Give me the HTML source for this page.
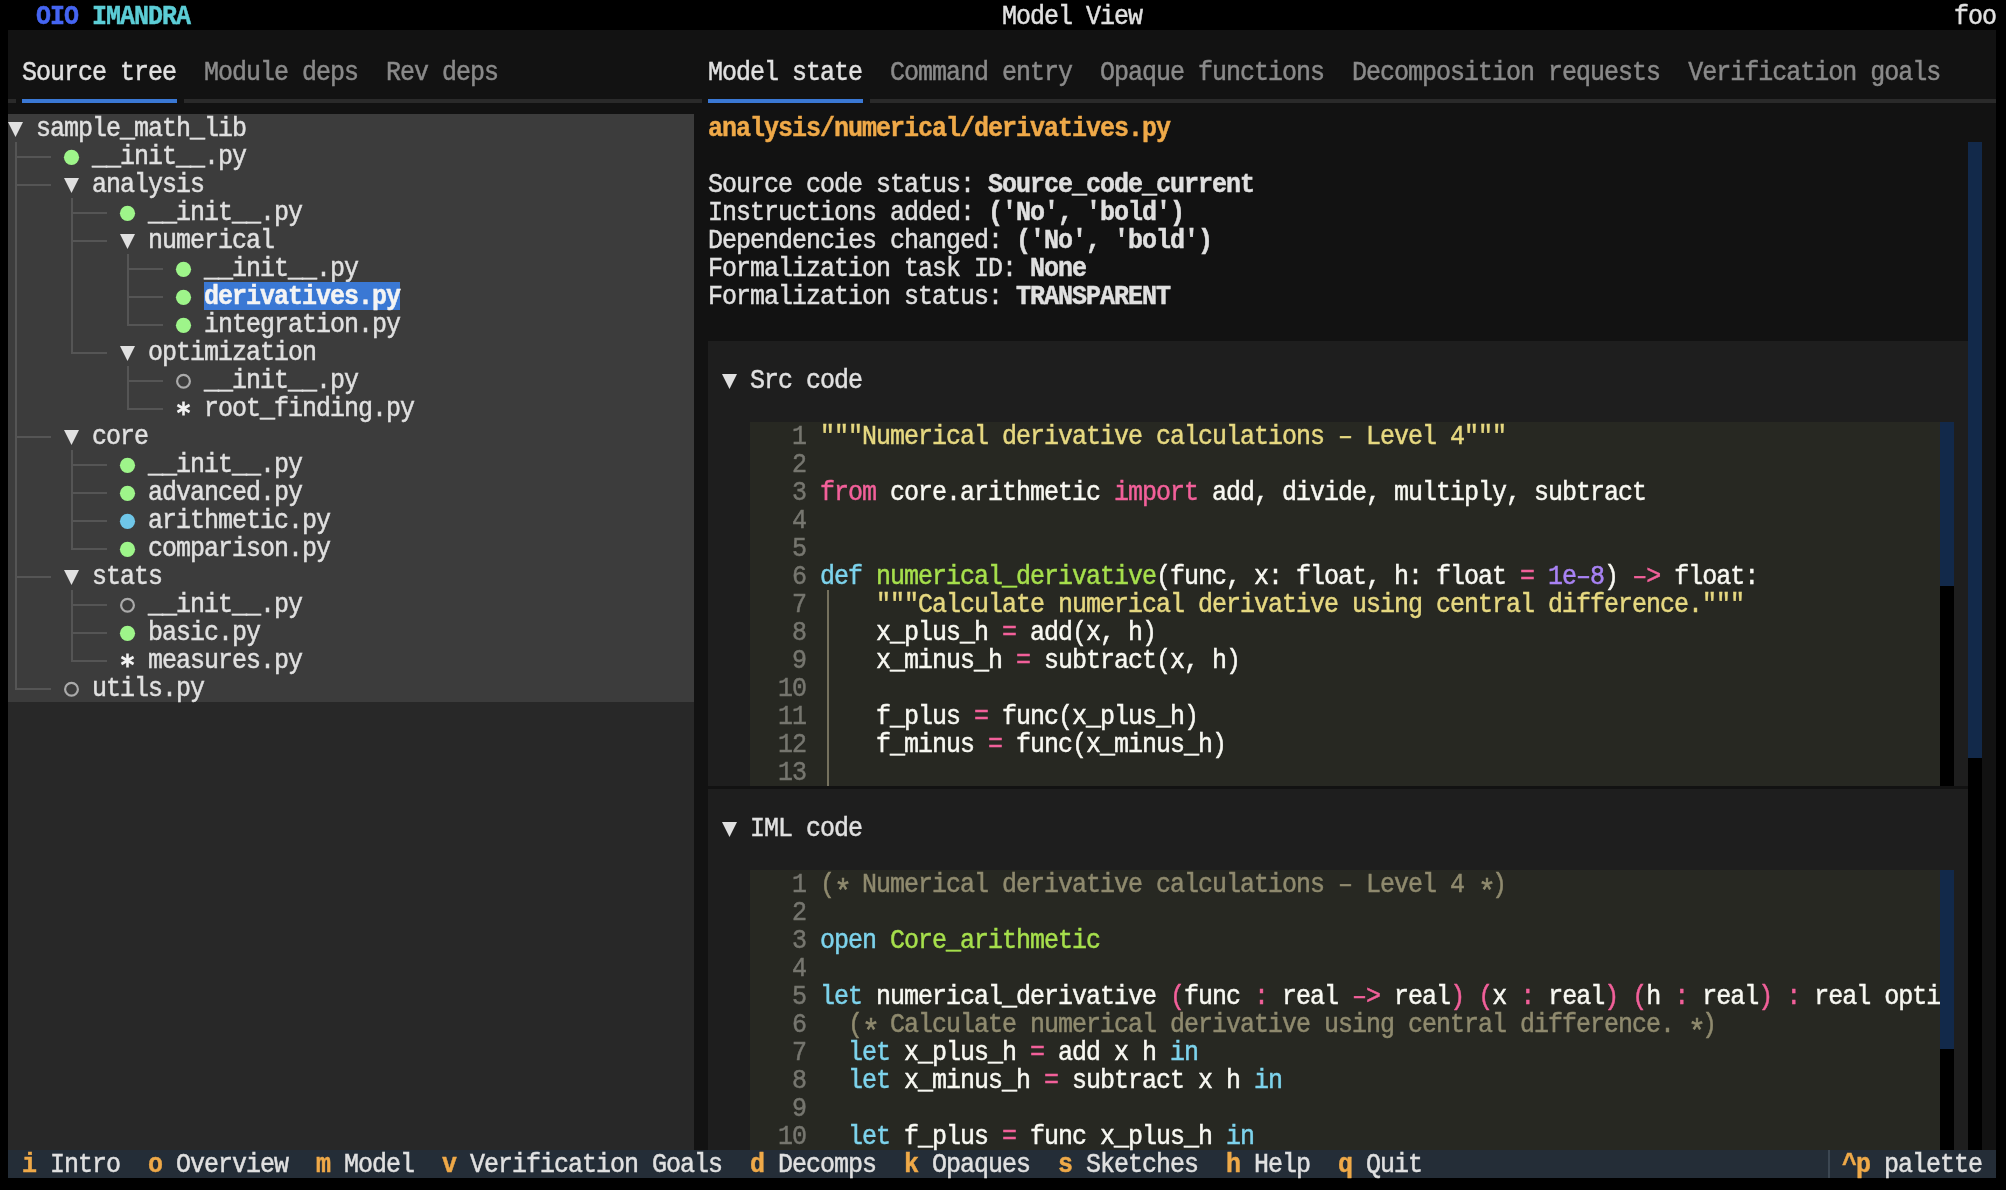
<!DOCTYPE html>
<html><head><meta charset="utf-8"><style>
html,body{margin:0;padding:0;width:2006px;height:1190px;overflow:hidden;background:#000}
.t{position:absolute;white-space:pre;font-family:"Liberation Mono",monospace;font-size:25px;letter-spacing:-1.0024px;line-height:28px;height:28px;color:#e0e0e0;-webkit-text-stroke-width:0.45px;transform:scaleY(1.08);transform-origin:0 20px;will-change:transform}
svg{position:absolute;left:0;top:0}
</style></head><body>
<div style="position:absolute;left:0px;top:0px;width:2006px;height:1190px;background:#000;"></div><div style="position:absolute;left:8px;top:30px;width:1988px;height:1120px;background:#121212;"></div><div style="position:absolute;left:8px;top:114px;width:686px;height:588px;background:#3c3c3c;"></div><div style="position:absolute;left:8px;top:702px;width:686px;height:448px;background:#282828;"></div><div style="position:absolute;left:8px;top:1150px;width:1988px;height:28px;background:#242d37;"></div><div class="t" style="left:36px;top:4px"><span style="color:#4565f2;font-weight:bold">OIO</span><span style="color:#e0e0e0"> </span><span style="color:#5ccdd6;font-weight:bold">IMANDRA</span></div><div class="t" style="left:1002px;top:4px"><span style="color:#e0e0e0">Model View</span></div><div class="t" style="left:1954px;top:4px"><span style="color:#e0e0e0">foo</span></div><div style="position:absolute;left:8px;top:99px;width:686px;height:4px;background:#2a2a2a;"></div><div style="position:absolute;left:16px;top:99px;width:6px;height:4px;background:#121212;"></div><div style="position:absolute;left:176px;top:99px;width:8px;height:4px;background:#121212;"></div><div style="position:absolute;left:22px;top:99px;width:155px;height:4px;background:#3a78d4;"></div><div style="position:absolute;left:694px;top:99px;width:1302px;height:4px;background:#2a2a2a;"></div><div style="position:absolute;left:702px;top:99px;width:6px;height:4px;background:#121212;"></div><div style="position:absolute;left:862px;top:99px;width:8px;height:4px;background:#121212;"></div><div style="position:absolute;left:708px;top:99px;width:155px;height:4px;background:#3a78d4;"></div><div class="t" style="left:22px;top:60px"><span style="color:#e0e0e0">Source tree</span><span style="color:#e0e0e0">  </span><span style="color:#8a8a8a">Module deps</span><span style="color:#e0e0e0">  </span><span style="color:#8a8a8a">Rev deps</span></div><div class="t" style="left:708px;top:60px"><span style="color:#e0e0e0">Model state</span><span style="color:#e0e0e0">  </span><span style="color:#8a8a8a">Command entry</span><span style="color:#e0e0e0">  </span><span style="color:#8a8a8a">Opaque functions</span><span style="color:#e0e0e0">  </span><span style="color:#8a8a8a">Decomposition requests</span><span style="color:#e0e0e0">  </span><span style="color:#8a8a8a">Verification goals</span></div><div class="t" style="left:36px;top:116px"><span style="color:#e0e0e0">sample_math_lib</span></div><div style="position:absolute;left:15px;top:142px;width:2px;height:28px;background:#555555;"></div><div style="position:absolute;left:17px;top:156px;width:34px;height:2px;background:#555555;"></div><div class="t" style="left:92px;top:144px"><span style="color:#e0e0e0">__init__.py</span></div><div style="position:absolute;left:15px;top:170px;width:2px;height:28px;background:#555555;"></div><div style="position:absolute;left:17px;top:184px;width:34px;height:2px;background:#555555;"></div><div class="t" style="left:92px;top:172px"><span style="color:#e0e0e0">analysis</span></div><div style="position:absolute;left:15px;top:198px;width:2px;height:28px;background:#555555;"></div><div style="position:absolute;left:71px;top:198px;width:2px;height:28px;background:#555555;"></div><div style="position:absolute;left:73px;top:212px;width:34px;height:2px;background:#555555;"></div><div class="t" style="left:148px;top:200px"><span style="color:#e0e0e0">__init__.py</span></div><div style="position:absolute;left:15px;top:226px;width:2px;height:28px;background:#555555;"></div><div style="position:absolute;left:71px;top:226px;width:2px;height:28px;background:#555555;"></div><div style="position:absolute;left:73px;top:240px;width:34px;height:2px;background:#555555;"></div><div class="t" style="left:148px;top:228px"><span style="color:#e0e0e0">numerical</span></div><div style="position:absolute;left:15px;top:254px;width:2px;height:28px;background:#555555;"></div><div style="position:absolute;left:71px;top:254px;width:2px;height:28px;background:#555555;"></div><div style="position:absolute;left:127px;top:254px;width:2px;height:28px;background:#555555;"></div><div style="position:absolute;left:129px;top:268px;width:34px;height:2px;background:#555555;"></div><div class="t" style="left:204px;top:256px"><span style="color:#e0e0e0">__init__.py</span></div><div style="position:absolute;left:15px;top:282px;width:2px;height:28px;background:#555555;"></div><div style="position:absolute;left:71px;top:282px;width:2px;height:28px;background:#555555;"></div><div style="position:absolute;left:127px;top:282px;width:2px;height:28px;background:#555555;"></div><div style="position:absolute;left:129px;top:296px;width:34px;height:2px;background:#555555;"></div><div style="position:absolute;left:204px;top:282px;width:196px;height:28px;background:#3a78d4;"></div><div class="t" style="left:204px;top:284px"><span style="color:#f4f4f4;font-weight:bold">derivatives.py</span></div><div style="position:absolute;left:15px;top:310px;width:2px;height:28px;background:#555555;"></div><div style="position:absolute;left:71px;top:310px;width:2px;height:28px;background:#555555;"></div><div style="position:absolute;left:127px;top:310px;width:2px;height:16px;background:#555555;"></div><div style="position:absolute;left:129px;top:324px;width:34px;height:2px;background:#555555;"></div><div class="t" style="left:204px;top:312px"><span style="color:#e0e0e0">integration.py</span></div><div style="position:absolute;left:15px;top:338px;width:2px;height:28px;background:#555555;"></div><div style="position:absolute;left:71px;top:338px;width:2px;height:16px;background:#555555;"></div><div style="position:absolute;left:73px;top:352px;width:34px;height:2px;background:#555555;"></div><div class="t" style="left:148px;top:340px"><span style="color:#e0e0e0">optimization</span></div><div style="position:absolute;left:15px;top:366px;width:2px;height:28px;background:#555555;"></div><div style="position:absolute;left:127px;top:366px;width:2px;height:28px;background:#555555;"></div><div style="position:absolute;left:129px;top:380px;width:34px;height:2px;background:#555555;"></div><div class="t" style="left:204px;top:368px"><span style="color:#e0e0e0">__init__.py</span></div><div style="position:absolute;left:15px;top:394px;width:2px;height:28px;background:#555555;"></div><div style="position:absolute;left:127px;top:394px;width:2px;height:16px;background:#555555;"></div><div style="position:absolute;left:129px;top:408px;width:34px;height:2px;background:#555555;"></div><div class="t" style="left:204px;top:396px"><span style="color:#e0e0e0">root_finding.py</span></div><div style="position:absolute;left:15px;top:422px;width:2px;height:28px;background:#555555;"></div><div style="position:absolute;left:17px;top:436px;width:34px;height:2px;background:#555555;"></div><div class="t" style="left:92px;top:424px"><span style="color:#e0e0e0">core</span></div><div style="position:absolute;left:15px;top:450px;width:2px;height:28px;background:#555555;"></div><div style="position:absolute;left:71px;top:450px;width:2px;height:28px;background:#555555;"></div><div style="position:absolute;left:73px;top:464px;width:34px;height:2px;background:#555555;"></div><div class="t" style="left:148px;top:452px"><span style="color:#e0e0e0">__init__.py</span></div><div style="position:absolute;left:15px;top:478px;width:2px;height:28px;background:#555555;"></div><div style="position:absolute;left:71px;top:478px;width:2px;height:28px;background:#555555;"></div><div style="position:absolute;left:73px;top:492px;width:34px;height:2px;background:#555555;"></div><div class="t" style="left:148px;top:480px"><span style="color:#e0e0e0">advanced.py</span></div><div style="position:absolute;left:15px;top:506px;width:2px;height:28px;background:#555555;"></div><div style="position:absolute;left:71px;top:506px;width:2px;height:28px;background:#555555;"></div><div style="position:absolute;left:73px;top:520px;width:34px;height:2px;background:#555555;"></div><div class="t" style="left:148px;top:508px"><span style="color:#e0e0e0">arithmetic.py</span></div><div style="position:absolute;left:15px;top:534px;width:2px;height:28px;background:#555555;"></div><div style="position:absolute;left:71px;top:534px;width:2px;height:16px;background:#555555;"></div><div style="position:absolute;left:73px;top:548px;width:34px;height:2px;background:#555555;"></div><div class="t" style="left:148px;top:536px"><span style="color:#e0e0e0">comparison.py</span></div><div style="position:absolute;left:15px;top:562px;width:2px;height:28px;background:#555555;"></div><div style="position:absolute;left:17px;top:576px;width:34px;height:2px;background:#555555;"></div><div class="t" style="left:92px;top:564px"><span style="color:#e0e0e0">stats</span></div><div style="position:absolute;left:15px;top:590px;width:2px;height:28px;background:#555555;"></div><div style="position:absolute;left:71px;top:590px;width:2px;height:28px;background:#555555;"></div><div style="position:absolute;left:73px;top:604px;width:34px;height:2px;background:#555555;"></div><div class="t" style="left:148px;top:592px"><span style="color:#e0e0e0">__init__.py</span></div><div style="position:absolute;left:15px;top:618px;width:2px;height:28px;background:#555555;"></div><div style="position:absolute;left:71px;top:618px;width:2px;height:28px;background:#555555;"></div><div style="position:absolute;left:73px;top:632px;width:34px;height:2px;background:#555555;"></div><div class="t" style="left:148px;top:620px"><span style="color:#e0e0e0">basic.py</span></div><div style="position:absolute;left:15px;top:646px;width:2px;height:28px;background:#555555;"></div><div style="position:absolute;left:71px;top:646px;width:2px;height:16px;background:#555555;"></div><div style="position:absolute;left:73px;top:660px;width:34px;height:2px;background:#555555;"></div><div class="t" style="left:148px;top:648px"><span style="color:#e0e0e0">measures.py</span></div><div style="position:absolute;left:15px;top:674px;width:2px;height:16px;background:#555555;"></div><div style="position:absolute;left:17px;top:688px;width:34px;height:2px;background:#555555;"></div><div class="t" style="left:92px;top:676px"><span style="color:#e0e0e0">utils.py</span></div><div class="t" style="left:708px;top:116px"><span style="color:#efa948;font-weight:bold">analysis/numerical/derivatives.py</span></div><div class="t" style="left:708px;top:172px"><span style="color:#e0e0e0">Source code status: </span><span style="color:#e0e0e0;font-weight:bold">Source_code_current</span></div><div class="t" style="left:708px;top:200px"><span style="color:#e0e0e0">Instructions added: </span><span style="color:#e0e0e0;font-weight:bold">(&#x27;No&#x27;, &#x27;bold&#x27;)</span></div><div class="t" style="left:708px;top:228px"><span style="color:#e0e0e0">Dependencies changed: </span><span style="color:#e0e0e0;font-weight:bold">(&#x27;No&#x27;, &#x27;bold&#x27;)</span></div><div class="t" style="left:708px;top:256px"><span style="color:#e0e0e0">Formalization task ID: </span><span style="color:#e0e0e0;font-weight:bold">None</span></div><div class="t" style="left:708px;top:284px"><span style="color:#e0e0e0">Formalization status: </span><span style="color:#e0e0e0;font-weight:bold">TRANSPARENT</span></div><div style="position:absolute;left:708px;top:338px;width:1260px;height:448px;background:#1e1e1e;"></div><div style="position:absolute;left:708px;top:338px;width:1260px;height:3px;background:#121212;"></div><div class="t" style="left:750px;top:368px"><span style="color:#e0e0e0">Src code</span></div><div style="position:absolute;left:750px;top:422px;width:1190px;height:364px;background:#272822;"></div><div class="t" style="left:764px;top:424px"><span style="color:#76766f">  1</span></div><div class="t" style="left:820px;top:424px"><span style="color:#e6d880">&quot;&quot;&quot;Numerical derivative calculations – Level 4&quot;&quot;&quot;</span></div><div class="t" style="left:764px;top:452px"><span style="color:#76766f">  2</span></div><div class="t" style="left:764px;top:480px"><span style="color:#76766f">  3</span></div><div class="t" style="left:820px;top:480px"><span style="color:#f2609a">from</span><span style="color:#f8f8f2"> core.arithmetic </span><span style="color:#f2609a">import</span><span style="color:#f8f8f2"> add, divide, multiply, subtract</span></div><div class="t" style="left:764px;top:508px"><span style="color:#76766f">  4</span></div><div class="t" style="left:764px;top:536px"><span style="color:#76766f">  5</span></div><div class="t" style="left:764px;top:564px"><span style="color:#76766f">  6</span></div><div class="t" style="left:820px;top:564px"><span style="color:#7dd3ec">def</span><span style="color:#f8f8f2"> </span><span style="color:#a6df4c">numerical_derivative</span><span style="color:#f8f8f2">(func, x: float, h: float </span><span style="color:#f2609a">=</span><span style="color:#f8f8f2"> </span><span style="color:#a983f5">1e–8</span><span style="color:#f8f8f2">) </span><span style="color:#f2609a">–&gt;</span><span style="color:#f8f8f2"> float:</span></div><div class="t" style="left:764px;top:592px"><span style="color:#76766f">  7</span></div><div class="t" style="left:820px;top:592px"><span style="color:#e6d880">    &quot;&quot;&quot;Calculate numerical derivative using central difference.&quot;&quot;&quot;</span></div><div class="t" style="left:764px;top:620px"><span style="color:#76766f">  8</span></div><div class="t" style="left:820px;top:620px"><span style="color:#f8f8f2">    x_plus_h </span><span style="color:#f2609a">=</span><span style="color:#f8f8f2"> add(x, h)</span></div><div class="t" style="left:764px;top:648px"><span style="color:#76766f">  9</span></div><div class="t" style="left:820px;top:648px"><span style="color:#f8f8f2">    x_minus_h </span><span style="color:#f2609a">=</span><span style="color:#f8f8f2"> subtract(x, h)</span></div><div class="t" style="left:764px;top:676px"><span style="color:#76766f"> 10</span></div><div class="t" style="left:764px;top:704px"><span style="color:#76766f"> 11</span></div><div class="t" style="left:820px;top:704px"><span style="color:#f8f8f2">    f_plus </span><span style="color:#f2609a">=</span><span style="color:#f8f8f2"> func(x_plus_h)</span></div><div class="t" style="left:764px;top:732px"><span style="color:#76766f"> 12</span></div><div class="t" style="left:820px;top:732px"><span style="color:#f8f8f2">    f_minus </span><span style="color:#f2609a">=</span><span style="color:#f8f8f2"> func(x_minus_h)</span></div><div class="t" style="left:764px;top:760px"><span style="color:#76766f"> 13</span></div><div style="position:absolute;left:827px;top:590px;width:2px;height:196px;background:#75715e;"></div><div style="position:absolute;left:708px;top:786px;width:1260px;height:364px;background:#1e1e1e;"></div><div style="position:absolute;left:708px;top:786px;width:1260px;height:3px;background:#121212;"></div><div class="t" style="left:750px;top:816px"><span style="color:#e0e0e0">IML code</span></div><div style="position:absolute;left:750px;top:870px;width:1190px;height:280px;background:#272822;"></div><div class="t" style="left:764px;top:872px"><span style="color:#76766f">  1</span></div><div class="t" style="left:820px;top:872px"><span style="color:#8f8a6e">(<span style="position:relative;top:9px;font-size:30px;line-height:0;letter-spacing:-4.0034px">*</span> Numerical derivative calculations – Level 4 <span style="position:relative;top:9px;font-size:30px;line-height:0;letter-spacing:-4.0034px">*</span>)</span></div><div class="t" style="left:764px;top:900px"><span style="color:#76766f">  2</span></div><div class="t" style="left:764px;top:928px"><span style="color:#76766f">  3</span></div><div class="t" style="left:820px;top:928px"><span style="color:#7dd3ec">open</span><span style="color:#f8f8f2"> </span><span style="color:#a6df4c">Core_arithmetic</span></div><div class="t" style="left:764px;top:956px"><span style="color:#76766f">  4</span></div><div class="t" style="left:764px;top:984px"><span style="color:#76766f">  5</span></div><div class="t" style="left:820px;top:984px"><span style="color:#7dd3ec">let</span><span style="color:#f8f8f2"> numerical_derivative </span><span style="color:#f2609a">(</span><span style="color:#f8f8f2">func </span><span style="color:#f2609a">:</span><span style="color:#f8f8f2"> real </span><span style="color:#f2609a">–&gt;</span><span style="color:#f8f8f2"> real</span><span style="color:#f2609a">)</span><span style="color:#f8f8f2"> </span><span style="color:#f2609a">(</span><span style="color:#f8f8f2">x </span><span style="color:#f2609a">:</span><span style="color:#f8f8f2"> real</span><span style="color:#f2609a">)</span><span style="color:#f8f8f2"> </span><span style="color:#f2609a">(</span><span style="color:#f8f8f2">h </span><span style="color:#f2609a">:</span><span style="color:#f8f8f2"> real</span><span style="color:#f2609a">)</span><span style="color:#f8f8f2"> </span><span style="color:#f2609a">:</span><span style="color:#f8f8f2"> real opti</span></div><div class="t" style="left:764px;top:1012px"><span style="color:#76766f">  6</span></div><div class="t" style="left:820px;top:1012px"><span style="color:#8f8a6e">  (<span style="position:relative;top:9px;font-size:30px;line-height:0;letter-spacing:-4.0034px">*</span> Calculate numerical derivative using central difference. <span style="position:relative;top:9px;font-size:30px;line-height:0;letter-spacing:-4.0034px">*</span>)</span></div><div class="t" style="left:764px;top:1040px"><span style="color:#76766f">  7</span></div><div class="t" style="left:820px;top:1040px"><span style="color:#f8f8f2">  </span><span style="color:#7dd3ec">let</span><span style="color:#f8f8f2"> x_plus_h </span><span style="color:#f2609a">=</span><span style="color:#f8f8f2"> add x h </span><span style="color:#7dd3ec">in</span></div><div class="t" style="left:764px;top:1068px"><span style="color:#76766f">  8</span></div><div class="t" style="left:820px;top:1068px"><span style="color:#f8f8f2">  </span><span style="color:#7dd3ec">let</span><span style="color:#f8f8f2"> x_minus_h </span><span style="color:#f2609a">=</span><span style="color:#f8f8f2"> subtract x h </span><span style="color:#7dd3ec">in</span></div><div class="t" style="left:764px;top:1096px"><span style="color:#76766f">  9</span></div><div class="t" style="left:764px;top:1124px"><span style="color:#76766f"> 10</span></div><div class="t" style="left:820px;top:1124px"><span style="color:#f8f8f2">  </span><span style="color:#7dd3ec">let</span><span style="color:#f8f8f2"> f_plus </span><span style="color:#f2609a">=</span><span style="color:#f8f8f2"> func x_plus_h </span><span style="color:#7dd3ec">in</span></div><div style="position:absolute;left:1940px;top:422px;width:14px;height:364px;background:#000;"></div><div style="position:absolute;left:1940px;top:422px;width:14px;height:164px;background:#12294a;"></div><div style="position:absolute;left:1940px;top:870px;width:14px;height:280px;background:#000;"></div><div style="position:absolute;left:1940px;top:870px;width:14px;height:179px;background:#12294a;"></div><div style="position:absolute;left:1968px;top:142px;width:14px;height:1008px;background:#000;"></div><div style="position:absolute;left:1968px;top:142px;width:14px;height:616px;background:#12294a;"></div><div class="t" style="left:22px;top:1152px"><span style="color:#efa948;font-weight:bold">i</span><span style="color:#e0e0e0"> </span><span style="color:#e0e0e0">Intro</span></div><div class="t" style="left:148px;top:1152px"><span style="color:#efa948;font-weight:bold">o</span><span style="color:#e0e0e0"> </span><span style="color:#e0e0e0">Overview</span></div><div class="t" style="left:316px;top:1152px"><span style="color:#efa948;font-weight:bold">m</span><span style="color:#e0e0e0"> </span><span style="color:#e0e0e0">Model</span></div><div class="t" style="left:442px;top:1152px"><span style="color:#efa948;font-weight:bold">v</span><span style="color:#e0e0e0"> </span><span style="color:#e0e0e0">Verification Goals</span></div><div class="t" style="left:750px;top:1152px"><span style="color:#efa948;font-weight:bold">d</span><span style="color:#e0e0e0"> </span><span style="color:#e0e0e0">Decomps</span></div><div class="t" style="left:904px;top:1152px"><span style="color:#efa948;font-weight:bold">k</span><span style="color:#e0e0e0"> </span><span style="color:#e0e0e0">Opaques</span></div><div class="t" style="left:1058px;top:1152px"><span style="color:#efa948;font-weight:bold">s</span><span style="color:#e0e0e0"> </span><span style="color:#e0e0e0">Sketches</span></div><div class="t" style="left:1226px;top:1152px"><span style="color:#efa948;font-weight:bold">h</span><span style="color:#e0e0e0"> </span><span style="color:#e0e0e0">Help</span></div><div class="t" style="left:1338px;top:1152px"><span style="color:#efa948;font-weight:bold">q</span><span style="color:#e0e0e0"> </span><span style="color:#e0e0e0">Quit</span></div><div style="position:absolute;left:1828px;top:1150px;width:2px;height:28px;background:#3c4752;"></div><div class="t" style="left:1842px;top:1152px"><span style="color:#efa948;font-weight:bold">^p</span><span style="color:#e0e0e0"> </span><span style="color:#e0e0e0">palette</span></div>
<svg width="2006" height="1190" viewBox="0 0 2006 1190"><polygon points="8.0,122 23.0,122 15.5,137" fill="#e0e0e0"/><circle cx="71.5" cy="157.3" r="7.6" fill="#9ef58a"/><polygon points="64.0,178 79.0,178 71.5,193" fill="#e0e0e0"/><circle cx="127.5" cy="213.3" r="7.6" fill="#9ef58a"/><polygon points="120.0,234 135.0,234 127.5,249" fill="#e0e0e0"/><circle cx="183.5" cy="269.3" r="7.6" fill="#9ef58a"/><circle cx="183.5" cy="297.3" r="7.6" fill="#9ef58a"/><circle cx="183.5" cy="325.3" r="7.6" fill="#9ef58a"/><polygon points="120.0,346 135.0,346 127.5,361" fill="#e0e0e0"/><circle cx="183.5" cy="381.3" r="6.4" fill="none" stroke="#aaaaaa" stroke-width="2.2"/><line x1="183.50" y1="401.50" x2="183.50" y2="415.50" stroke="#f2f2f2" stroke-width="2.6"/><line x1="177.44" y1="405.00" x2="189.56" y2="412.00" stroke="#f2f2f2" stroke-width="2.6"/><line x1="189.56" y1="405.00" x2="177.44" y2="412.00" stroke="#f2f2f2" stroke-width="2.6"/><polygon points="64.0,430 79.0,430 71.5,445" fill="#e0e0e0"/><circle cx="127.5" cy="465.3" r="7.6" fill="#9ef58a"/><circle cx="127.5" cy="493.3" r="7.6" fill="#9ef58a"/><circle cx="127.5" cy="521.3" r="7.6" fill="#6fc6e8"/><circle cx="127.5" cy="549.3" r="7.6" fill="#9ef58a"/><polygon points="64.0,570 79.0,570 71.5,585" fill="#e0e0e0"/><circle cx="127.5" cy="605.3" r="6.4" fill="none" stroke="#aaaaaa" stroke-width="2.2"/><circle cx="127.5" cy="633.3" r="7.6" fill="#9ef58a"/><line x1="127.50" y1="653.50" x2="127.50" y2="667.50" stroke="#f2f2f2" stroke-width="2.6"/><line x1="121.44" y1="657.00" x2="133.56" y2="664.00" stroke="#f2f2f2" stroke-width="2.6"/><line x1="133.56" y1="657.00" x2="121.44" y2="664.00" stroke="#f2f2f2" stroke-width="2.6"/><circle cx="71.5" cy="689.3" r="6.4" fill="none" stroke="#aaaaaa" stroke-width="2.2"/><polygon points="722,374 737,374 729.5,389" fill="#e0e0e0"/><polygon points="722,822 737,822 729.5,837" fill="#e0e0e0"/></svg>
</body></html>
